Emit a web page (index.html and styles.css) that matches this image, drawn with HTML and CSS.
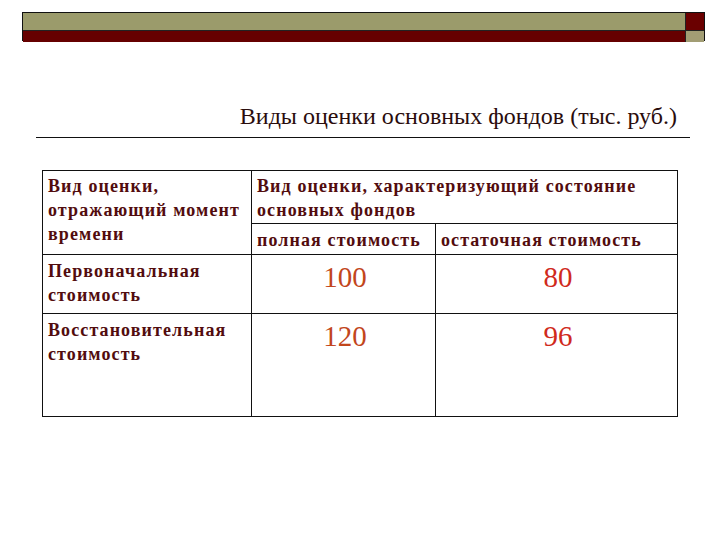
FILE: index.html
```html
<!DOCTYPE html>
<html lang="ru">
<head>
<meta charset="utf-8">
<link rel="stylesheet" href="styles.css">
</head>
<body>
<div class="topbar">
  <div class="olive-bar"></div>
  <div class="red-sq"></div>
  <div class="red-bar"></div>
  <div class="olive-sq"></div>
</div>
<div class="title-wrap">
  <h1 class="title">Виды оценки основных фондов (тыс. руб.)</h1>
</div>
<div class="rule"></div>
<table class="grid">
  <colgroup>
    <col class="c1">
    <col class="c2">
    <col class="c3">
  </colgroup>
  <tr class="r-head">
    <th rowspan="2" class="hd">Вид оценки,<br>отражающий момент<br>времени</th>
    <th colspan="2" class="hd hd2">Вид оценки, характеризующий состояние<br>основных фондов</th>
  </tr>
  <tr class="r-sub">
    <th class="hd hd2">полная стоимость</th>
    <th class="hd hd2">остаточная стоимость</th>
  </tr>
  <tr class="r1">
    <td class="hd">Первоначальная<br>стоимость</td>
    <td class="num n1">100</td>
    <td class="num n2">80</td>
  </tr>
  <tr class="r2">
    <td class="hd">Восстановительная<br>стоимость</td>
    <td class="num n1">120</td>
    <td class="num n2">96</td>
  </tr>
</table>
</body>
</html>
```
FILE: styles.css
```css
html, body {
  margin: 0;
  padding: 0;
  background: #ffffff;
}
body, h1, th, td {
  font-family: "Liberation Serif", "DejaVu Serif", "Times New Roman", serif;
}
body {
  width: 720px;
  height: 540px;
}
.topbar {
  margin: 12px 0 0 22px;
  width: 683px;
  height: 29px;
  display: grid;
  grid-template-columns: 1fr 18px;
  grid-template-rows: 18px 11px;
  border: 1px solid #111;
  box-sizing: border-box;
}
.olive-bar { background: #9b9b6b; border-bottom: 1px solid #222; border-right: 1px solid #222; }
.red-sq { background: #6a0000; border-bottom: 1px solid #222; }
.red-bar { background: #660000; border-right: 1px solid #222; }
.olive-sq { background: #a29d74; }
.title-wrap {
  width: 677px;
  margin-top: 62px;
  display: flex;
  justify-content: flex-end;
}
.title {
  margin: 0;
  font-weight: normal;
  font-size: 24px;
  line-height: 26px;
  color: #2a0c0c;
}
.rule {
  margin: 8px 0 0 36px;
  width: 654px;
  height: 0;
  border-top: 1.5px solid #111;
}
.grid {
  margin: 32px 0 0 42px;
  width: 635px;
  border-collapse: collapse;
  table-layout: fixed;
}
.c1 { width: 209px; }
.c2 { width: 184px; }
.c3 { width: 242px; }
.grid th, .grid td {
  border: 1.5px solid #111;
  vertical-align: top;
  text-align: left;
  padding: 3px 2px 0 5px;
}
.hd {
  font-weight: bold;
  font-size: 18px;
  line-height: 24px;
  color: #520c0e;
  letter-spacing: 1.1px;
}
.hd2 { padding-left: 7px; }
.r-head { height: 53px; }
.r-sub { height: 31px; }
.r-sub th { padding-top: 4px; }
.r1 { height: 59px; }
.r2 { height: 103px; }
.r1 .hd, .r2 .hd { padding-top: 4px; }
.num {
  text-align: center !important;
  font-size: 29px;
  line-height: 32px;
  padding-top: 6px !important;
}
.n1 { color: #c2461c; }
.n2 { color: #d02a1c; }
```
